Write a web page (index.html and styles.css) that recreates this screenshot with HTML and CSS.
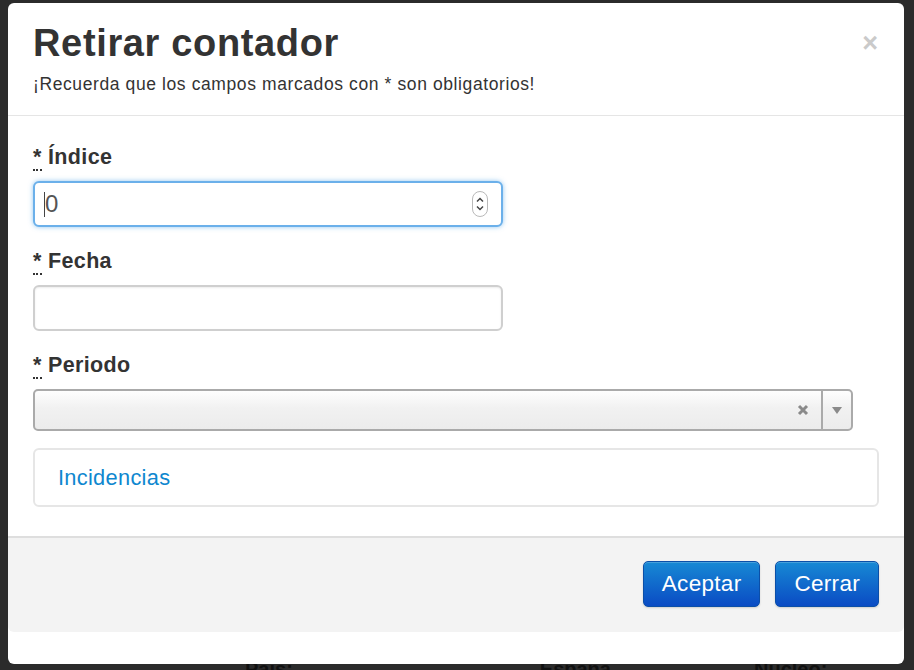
FILE: index.html
```html
<!DOCTYPE html>
<html lang="es">
<head>
<meta charset="utf-8">
<title>Retirar contador</title>
<link rel="stylesheet" href="styles.css">
</head>
<body>
<div class="page">
  <div class="modal">
    <div class="modal-header">
      <div class="head-row">
        <h1 class="title">Retirar contador</h1>
        <span class="close">×</span>
      </div>
      <p class="subtitle">¡Recuerda que los campos marcados con * son obligatorios!</p>
    </div>
    <div class="modal-body">
      <div class="field">
        <label class="label"><abbr class="req">*</abbr> Índice</label>
        <div class="input input-focus">
          <span class="caret"></span><span class="value">0</span>
          <span class="spinner">
            <svg width="16" height="26" viewBox="0 0 16 26">
              <rect x="0.5" y="0.5" width="15" height="25" rx="7.5" fill="#fff" stroke="#b9b9b9"/>
              <path d="M5 10.5 L8 7.5 L11 10.5" fill="none" stroke="#444" stroke-width="1.5"/>
              <path d="M5 15.5 L8 18.5 L11 15.5" fill="none" stroke="#444" stroke-width="1.5"/>
            </svg>
          </span>
        </div>
      </div>
      <div class="field">
        <label class="label"><abbr class="req">*</abbr> Fecha</label>
        <div class="input"></div>
      </div>
      <div class="field">
        <label class="label"><abbr class="req">*</abbr> Periodo</label>
        <div class="select">
          <span class="select-text"></span>
          <span class="select-clear">
            <svg width="12" height="12" viewBox="0 0 12 12"><path d="M2 2 L10 10 M10 2 L2 10" stroke="#8a8a8a" stroke-width="3"/></svg>
          </span>
          <span class="select-arrow">
            <svg width="10" height="8" viewBox="0 0 10 8"><path d="M0 1 L10 1 L5 8 Z" fill="#8a8a8a"/></svg>
          </span>
        </div>
      </div>
      <div class="panel">
        <a class="panel-link">Incidencias</a>
      </div>
    </div>
    <div class="modal-footer">
      <button class="btn">Aceptar</button>
      <button class="btn">Cerrar</button>
    </div>
  </div>
  <div class="under">
    <span class="under-a">País:</span>
    <span class="under-b">España</span>
    <span class="under-c">Núcleo:</span>
  </div>
</div>
</body>
</html>
```

FILE: styles.css
```css
* { box-sizing: border-box; }
html, body { margin: 0; padding: 0; }
body {
  background: #2b2b2b;
  font-family: "Liberation Sans", Arial, sans-serif;
  color: #333;
  overflow: hidden;
  width: 914px;
  height: 670px;
}
.page {
  padding: 3px 10px 0 8px;
}
.modal {
  width: 896px;
  height: 661px;
  background: #fff;
  border-radius: 6px;
  display: flex;
  flex-direction: column;
  position: relative;
  z-index: 2;
}
.modal-header {
  padding: 18px 25px 0 25px;
  height: 113px;
  border-bottom: 1px solid #e5e5e5;
}
.head-row {
  display: flex;
  justify-content: space-between;
  align-items: flex-start;
}
.title {
  margin: 0;
  font-size: 38px;
  line-height: 44px;
  font-weight: bold;
  letter-spacing: 0.65px;
  color: #333;
}
.close {
  font-size: 27px;
  font-weight: bold;
  color: #cacaca;
  line-height: 30px;
  margin-top: 7px;
  margin-right: 1px;
}
.subtitle {
  margin: 8px 0 0 0;
  font-size: 17.5px;
  line-height: 22px;
  letter-spacing: 0.6px;
  color: #333;
}
.modal-body {
  padding: 27px 25px 0 25px;
  flex: 1;
}
.field {
  display: flex;
  flex-direction: column;
  align-items: flex-start;
  margin-bottom: 20px;
}
.label {
  font-size: 21.5px;
  font-weight: bold;
  line-height: 28px;
  letter-spacing: 0.35px;
  color: #333;
  margin-bottom: 10px;
}
.req {
  text-decoration: none;
  border-bottom: 2px dotted #333;
}
.input {
  width: 470px;
  height: 46px;
  border: 2px solid #cfcfcf;
  border-radius: 6px;
  background: #fff;
  box-shadow: inset 0 1px 2px rgba(0,0,0,0.08);
  display: flex;
  align-items: center;
  padding: 0 13px 0 9px;
}
.input-focus {
  border-color: #6bb0ea;
  box-shadow: 0 0 5px rgba(102,175,233,0.7);
}
.caret {
  width: 1px;
  height: 25px;
  background: #444;
}
.value {
  font-size: 24px;
  color: #555;
  line-height: 28px;
  flex: 1;
}
.spinner {
  display: flex;
}
.select {
  width: 820px;
  height: 42px;
  border: 2px solid #aaa;
  border-radius: 5px;
  background: linear-gradient(#fefefe 0%, #f1f1f1 45%, #ececec 100%);
  display: flex;
  align-items: stretch;
}
.select-text { flex: 1; }
.select-clear {
  display: flex;
  align-items: center;
  padding-right: 12px;
}
.select-arrow {
  width: 30px;
  border-left: 2px solid #aaa;
  display: flex;
  align-items: center;
  justify-content: center;
}
.panel {
  margin-top: -3px;
  width: 846px;
  height: 59px;
  border: 2px solid #e6e6e6;
  border-radius: 6px;
  display: flex;
  align-items: center;
  padding-left: 23px;
}
.panel-link {
  color: #0e87cf;
  font-size: 21.8px;
  letter-spacing: 0.3px;
  text-decoration: none;
}
.modal-footer {
  height: 96px;
  margin-bottom: 32px;
  background: #f3f3f3;
  border-top: 2px solid #dedede;
  border-radius: 0 0 6px 6px;
  display: flex;
  justify-content: flex-end;
  align-items: flex-start;
  padding: 23px 25px 0 0;
  gap: 15px;
}
.btn {
  height: 46px;
  padding: 0 18px;
  font-family: "Liberation Sans", Arial, sans-serif;
  font-size: 22.5px;
  letter-spacing: 0.3px;
  color: #fff;
  border: 1px solid #0b4fa8;
  border-radius: 5px;
  background: linear-gradient(#1789d4, #0a4bc4);
  box-shadow: inset 0 1px 0 rgba(255,255,255,0.2), 0 1px 2px rgba(0,0,0,0.15);
}
.under {
  position: relative;
  z-index: 1;
  margin-top: -6px;
  height: 30px;
  font-size: 20px;
  font-weight: bold;
  color: #111;
  display: flex;
}
.under-a { margin-left: 237px; }
.under-b { margin-left: 247px; }
.under-c { margin-left: 143px; }
```
